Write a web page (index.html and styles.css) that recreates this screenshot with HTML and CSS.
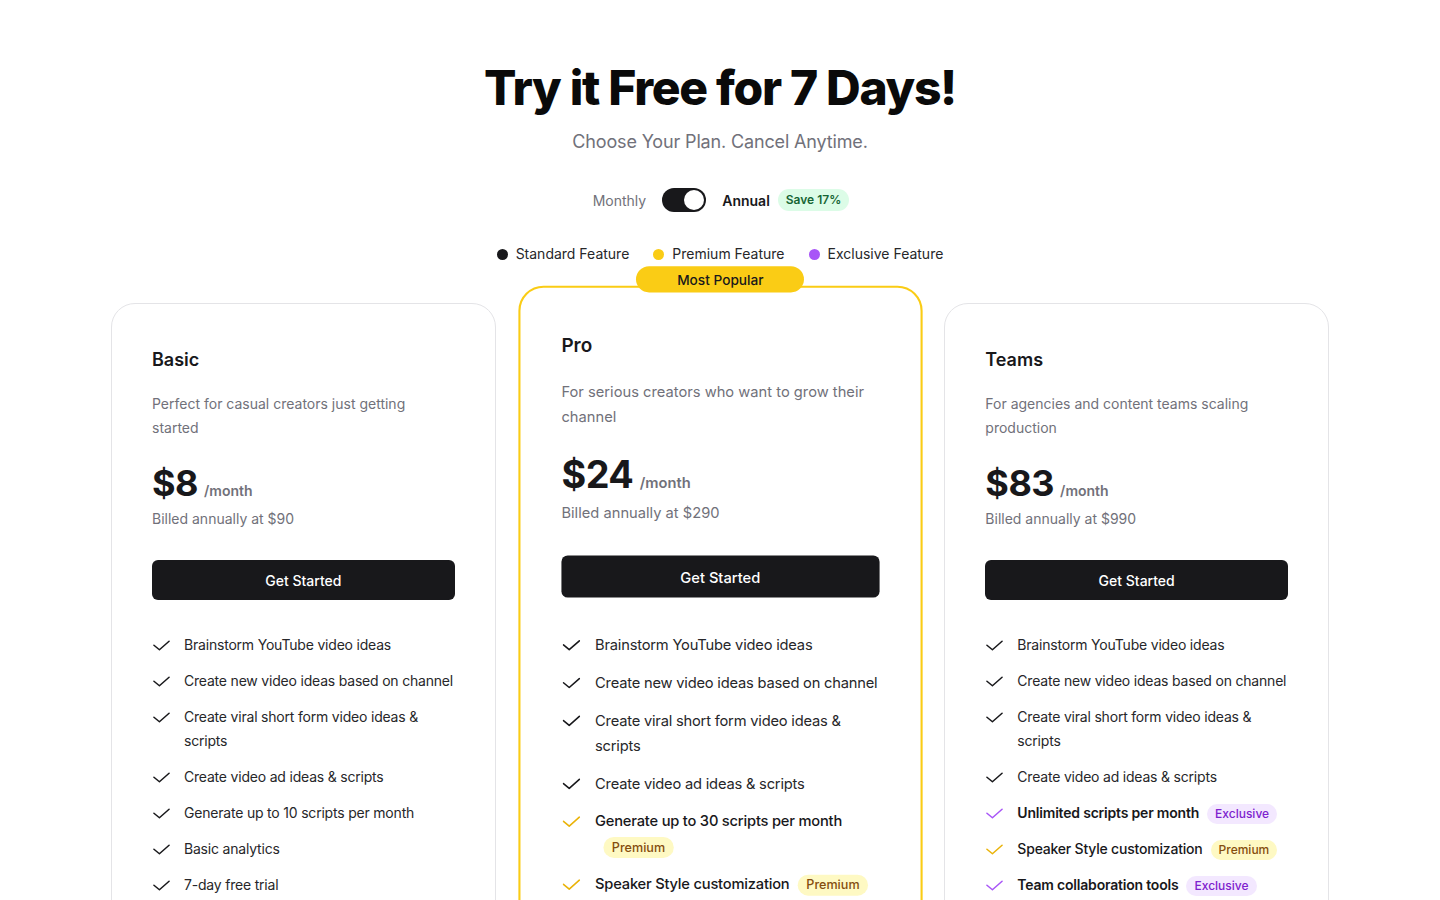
FILE: index.html
```html
<!DOCTYPE html>
<html lang="en">
<head>
<meta charset="utf-8">
<title>Pricing</title>
<link rel="stylesheet" href="styles.css">
</head>
<body>
<section class="pricing">
  <h1 class="title">Try it Free for 7 Days!</h1>
  <p class="subtitle">Choose Your Plan. Cancel Anytime.</p>

  <div class="toggle-row">
    <span class="toggle-label">Monthly</span>
    <span class="switch"><span class="knob"></span></span>
    <span class="toggle-label active">Annual</span>
    <span class="save">Save 17%</span>
  </div>

  <div class="legend">
    <span class="legend-item"><span class="dot dot-standard"></span>Standard Feature</span>
    <span class="legend-item"><span class="dot dot-premium"></span>Premium Feature</span>
    <span class="legend-item"><span class="dot dot-exclusive"></span>Exclusive Feature</span>
  </div>

  <div class="cards">
    <div class="card">
      <h2 class="plan">Basic</h2>
      <p class="desc">Perfect for casual creators just getting started</p>
      <div class="price"><span class="amount">$8</span><span class="per">/month</span></div>
      <p class="billed">Billed annually at $90</p>
      <button class="cta">Get Started</button>
      <ul class="features">
        <li><svg class="check" viewBox="0 0 18 11"><path d="M1 5.2 6.8 10 17 1"/></svg><span>Brainstorm YouTube video ideas</span></li>
        <li><svg class="check" viewBox="0 0 18 11"><path d="M1 5.2 6.8 10 17 1"/></svg><span>Create new video ideas based on channel</span></li>
        <li><svg class="check" viewBox="0 0 18 11"><path d="M1 5.2 6.8 10 17 1"/></svg><span>Create viral short form video ideas &amp; scripts</span></li>
        <li><svg class="check" viewBox="0 0 18 11"><path d="M1 5.2 6.8 10 17 1"/></svg><span>Create video ad ideas &amp; scripts</span></li>
        <li><svg class="check" viewBox="0 0 18 11"><path d="M1 5.2 6.8 10 17 1"/></svg><span>Generate up to 10 scripts per month</span></li>
        <li><svg class="check" viewBox="0 0 18 11"><path d="M1 5.2 6.8 10 17 1"/></svg><span>Basic analytics</span></li>
        <li><svg class="check" viewBox="0 0 18 11"><path d="M1 5.2 6.8 10 17 1"/></svg><span>7-day free trial</span></li>
      </ul>
    </div>

    <div class="card card-popular">
      <span class="popular">Most Popular</span>
      <h2 class="plan">Pro</h2>
      <p class="desc">For serious creators who want to grow their channel</p>
      <div class="price"><span class="amount">$24</span><span class="per">/month</span></div>
      <p class="billed">Billed annually at $290</p>
      <button class="cta">Get Started</button>
      <ul class="features">
        <li><svg class="check" viewBox="0 0 18 11"><path d="M1 5.2 6.8 10 17 1"/></svg><span>Brainstorm YouTube video ideas</span></li>
        <li><svg class="check" viewBox="0 0 18 11"><path d="M1 5.2 6.8 10 17 1"/></svg><span>Create new video ideas based on channel</span></li>
        <li><svg class="check" viewBox="0 0 18 11"><path d="M1 5.2 6.8 10 17 1"/></svg><span>Create viral short form video ideas &amp; scripts</span></li>
        <li><svg class="check" viewBox="0 0 18 11"><path d="M1 5.2 6.8 10 17 1"/></svg><span>Create video ad ideas &amp; scripts</span></li>
        <li class="premium"><svg class="check" viewBox="0 0 18 11"><path d="M1 5.2 6.8 10 17 1"/></svg><span>Generate up to 30 scripts per month<span class="badge badge-premium">Premium</span></span></li>
        <li class="premium"><svg class="check" viewBox="0 0 18 11"><path d="M1 5.2 6.8 10 17 1"/></svg><span>Speaker Style customization<span class="badge badge-premium">Premium</span></span></li>
        <li><svg class="check" viewBox="0 0 18 11"><path d="M1 5.2 6.8 10 17 1"/></svg><span>Advanced analytics</span></li>
        <li><svg class="check" viewBox="0 0 18 11"><path d="M1 5.2 6.8 10 17 1"/></svg><span>7-day free trial</span></li>
      </ul>
    </div>

    <div class="card">
      <h2 class="plan">Teams</h2>
      <p class="desc">For agencies and content teams scaling production</p>
      <div class="price"><span class="amount">$83</span><span class="per">/month</span></div>
      <p class="billed">Billed annually at $990</p>
      <button class="cta">Get Started</button>
      <ul class="features">
        <li><svg class="check" viewBox="0 0 18 11"><path d="M1 5.2 6.8 10 17 1"/></svg><span>Brainstorm YouTube video ideas</span></li>
        <li><svg class="check" viewBox="0 0 18 11"><path d="M1 5.2 6.8 10 17 1"/></svg><span>Create new video ideas based on channel</span></li>
        <li><svg class="check" viewBox="0 0 18 11"><path d="M1 5.2 6.8 10 17 1"/></svg><span>Create viral short form video ideas &amp; scripts</span></li>
        <li><svg class="check" viewBox="0 0 18 11"><path d="M1 5.2 6.8 10 17 1"/></svg><span>Create video ad ideas &amp; scripts</span></li>
        <li class="exclusive"><svg class="check" viewBox="0 0 18 11"><path d="M1 5.2 6.8 10 17 1"/></svg><span>Unlimited scripts per month<span class="badge badge-exclusive">Exclusive</span></span></li>
        <li class="premium"><svg class="check" viewBox="0 0 18 11"><path d="M1 5.2 6.8 10 17 1"/></svg><span>Speaker Style customization<span class="badge badge-premium">Premium</span></span></li>
        <li class="exclusive"><svg class="check" viewBox="0 0 18 11"><path d="M1 5.2 6.8 10 17 1"/></svg><span>Team collaboration tools<span class="badge badge-exclusive">Exclusive</span></span></li>
        <li><svg class="check" viewBox="0 0 18 11"><path d="M1 5.2 6.8 10 17 1"/></svg><span>Advanced analytics</span></li>
      </ul>
    </div>
  </div>
</section>
</body>
</html>
```

FILE: styles.css
```css
* { box-sizing: border-box; }
html, body { margin: 0; padding: 0; background: #ffffff; }
body {
  font-family: Inter, "Noto Sans", sans-serif;
  color: #18181b;
  -webkit-font-smoothing: antialiased;
}
.pricing {
  max-width: 1218px;
  margin: 0 auto;
  padding-top: 64px;
  display: flex;
  flex-direction: column;
  align-items: center;
}
.title {
  margin: 0;
  font-size: 48px;
  line-height: 48px;
  font-weight: 800;
  letter-spacing: -1.3px;
  color: #0a0a0a;
}
.subtitle {
  margin: 16px 0 0;
  font-size: 18px;
  line-height: 28px;
  color: #71717a;
  letter-spacing: -0.15px;
}
.toggle-row {
  margin-top: 32px;
  margin-left: 2px;
  display: flex;
  align-items: center;
  height: 24px;
}
.toggle-label {
  font-size: 14px;
  color: #71717a;
}
.toggle-label.active {
  color: #18181b;
  font-weight: 600;
}
.switch {
  width: 44px;
  height: 24px;
  border-radius: 12px;
  background: #18181b;
  margin: 0 16px;
  display: flex;
  align-items: center;
  justify-content: flex-end;
  padding: 2px;
}
.knob {
  width: 20px;
  height: 20px;
  border-radius: 50%;
  background: #ffffff;
}
.save {
  margin-left: 8px;
  background: #dcfce7;
  color: #166534;
  font-size: 12px;
  font-weight: 600;
  line-height: 16px;
  padding: 3px 8px;
  border-radius: 999px;
}
.legend {
  margin-top: 32px;
  display: flex;
  gap: 24px;
  font-size: 14px;
  line-height: 20px;
  color: #27272a;
}
.legend-item {
  display: flex;
  align-items: center;
  gap: 8px;
}
.dot {
  width: 11px;
  height: 11px;
  border-radius: 50%;
}
.dot-standard { background: #18181b; }
.dot-premium { background: #facc15; }
.dot-exclusive { background: #a855f7; }

.cards {
  margin-top: 39px;
  width: 100%;
  display: grid;
  grid-template-columns: repeat(3, 1fr);
  gap: 32px;
}
.card {
  position: relative;
  border: 1px solid #e4e4e7;
  border-radius: 24px;
  padding: 42px 40px 40px;
  background: #ffffff;
}
.card-popular {
  border: 2px solid #facc15;
  padding: 41px 39px 39px;
  transform: scale(1.05);
}
.popular {
  position: absolute;
  top: -8px;
  left: 50%;
  transform: translate(-50%, -50%);
  width: 160px;
  height: 25px;
  background: #facc15;
  color: #18181b;
  border-radius: 999px;
  font-size: 13px;
  font-weight: 500;
  display: flex;
  align-items: center;
  justify-content: center;
}
.plan {
  margin: 0;
  font-size: 18px;
  line-height: 28px;
  font-weight: 600;
}
.desc {
  margin: 18px 0 0;
  font-size: 14px;
  line-height: 24px;
  color: #71717a;
}
.price {
  margin-top: 23px;
  display: flex;
  align-items: baseline;
}
.amount {
  font-size: 36px;
  line-height: 40px;
  font-weight: 700;
  letter-spacing: -0.5px;
}
.per {
  margin-left: 6px;
  font-size: 14px;
  font-weight: 600;
  color: #71717a;
}
.billed {
  margin: 6px 0 0;
  font-size: 14px;
  line-height: 20px;
  color: #71717a;
}
.cta {
  margin-top: 31px;
  width: 100%;
  height: 40px;
  border: none;
  border-radius: 6px;
  background: #18181b;
  color: #ffffff;
  font-family: inherit;
  font-size: 14px;
  font-weight: 500;
}
.features {
  list-style: none;
  margin: 33px 0 0;
  padding: 0;
  display: flex;
  flex-direction: column;
  gap: 12px;
}
.features li {
  display: flex;
  align-items: flex-start;
  font-size: 14px;
  line-height: 24px;
  letter-spacing: -0.2px;
  color: #27272a;
}
.check {
  flex: none;
  width: 17px;
  height: 11px;
  margin: 7px 14px 0 1px;
  fill: none;
  stroke: #18181b;
  stroke-width: 1.6;
  stroke-linecap: round;
  stroke-linejoin: round;
}
.features li.premium .check { stroke: #eab308; }
.features li.exclusive .check { stroke: #a855f7; }
.features li.premium { color: #18181b; font-weight: 500; }
.features li.exclusive { color: #18181b; font-weight: 600; }
.badge {
  display: inline-block;
  margin-left: 8px;
  padding: 0 8px;
  line-height: 20px;
  border-radius: 999px;
  font-size: 12px;
  font-weight: 500;
  letter-spacing: 0;
}
.badge-premium { background: #fef9c3; color: #854d0e; }
.badge-exclusive { background: #f3e8ff; color: #7e22ce; }
```
